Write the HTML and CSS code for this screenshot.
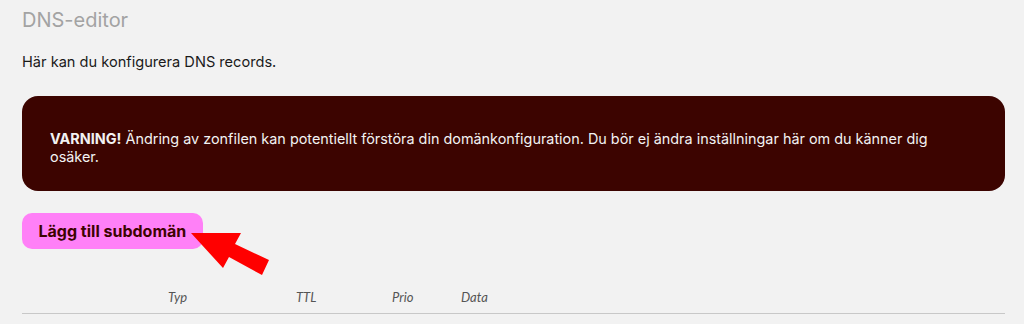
FILE: index.html
```html
<!DOCTYPE html>
<html lang="sv">
<head>
    <meta charset="UTF-8">
    <meta name="viewport" content="width=device-width, initial-scale=1.0">
    <title>DNS-editor</title>
    <link rel="stylesheet" href="styles.css">
</head>
<body>
    <div class="page">
        <h2 class="title">DNS-editor</h2>
        <p class="intro">Här kan du konfigurera DNS records.</p>

        <!-- varningsruta -->
        <div class="warning">
            <p><strong>VARNING!</strong> Ändring av zonfilen kan potentiellt förstöra din domänkonfiguration. Du bör ej ändra inställningar här om du känner dig osäker.</p>
        </div>

        <div class="actions">
            <button class="add-btn">Lägg till subdomän</button>
            <svg class="arrow" width="90" height="50" viewBox="0 0 90 50">
                <polygon points="0,0 50,0 44,11 78,27 71,42 38,24 32,35" fill="#ff0000"/>
            </svg>
        </div>

        <table class="records">
            <thead>
                <tr>
                    <th class="col-name"></th>
                    <th class="col-type">Typ</th>
                    <th class="col-ttl">TTL</th>
                    <th class="col-prio">Prio</th>
                    <th class="col-data">Data</th>
                </tr>
            </thead>
            <tbody>
            </tbody>
        </table>
    </div>
</body>
</html>
```

FILE: styles.css
```css
body {
    margin: 0;
    background-color: #f2f2f2;
    font-family: "Inter", "Open Sans", sans-serif;
    color: #1a1a1a;
}

.page {
    padding: 8px 19px 0 22px;
}

.title {
    margin: 0;
    font-size: 20px;
    font-weight: 400;
    color: #a3a3a3;
    line-height: 24px;
}

.intro {
    margin: 21px 0 0 0;
    font-size: 14.6px;
    line-height: 18px;
}

/* varningsruta */
.warning {
    margin-top: 25px;
    background-color: #3c0400;
    border-radius: 16px;
    color: #f2f2f2;
    padding: 34px 28px 25px 28px;
}

.warning p {
    margin: 0;
    font-size: 14.4px;
    line-height: 18px;
}

.actions {
    position: relative;
    margin-top: 22px;
}

.add-btn {
    background-color: #ff80f7;
    color: #3c0400;
    border: 0;
    border-radius: 10px;
    font-family: inherit;
    font-size: 16px;
    font-weight: 700;
    height: 36px;
    padding: 0 16.5px;
    cursor: pointer;
}

.arrow {
    position: absolute;
    left: 169px;
    top: 20px;
}

.records {
    width: 100%;
    margin-top: 40px;
    border-collapse: collapse;
}

.records th {
    font-weight: 400;
    font-style: italic;
    font-family: "Lato", sans-serif;
    font-size: 13px;
    color: #555;
    text-align: left;
    padding: 0 0 8px 0;
    border-bottom: 1px solid #c8c8c8;
}

.col-name { width: 146px; }
.col-type { width: 128px; }
.col-ttl { width: 96px; }
.col-prio { width: 69px; }
```
